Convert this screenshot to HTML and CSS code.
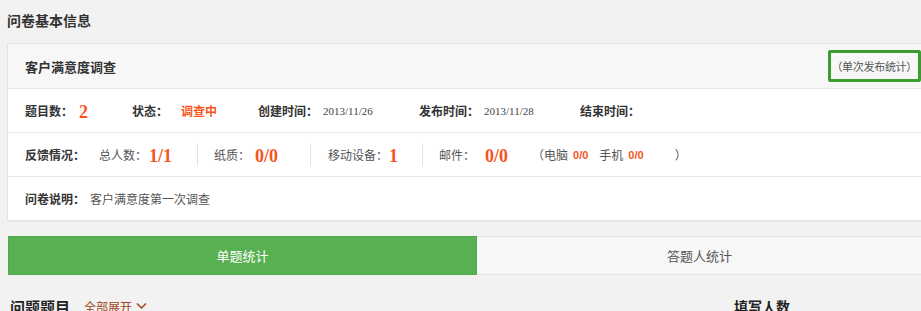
FILE: index.html
```html
<!DOCTYPE html>
<html lang="zh">
<head>
<meta charset="utf-8">
<link rel="stylesheet" href="styles.css">
</head>
<body>
<div class="page">
  <h2 class="page-title">问卷基本信息</h2>
  <div class="card">
    <div class="card-head">
      <span class="survey-name">客户满意度调查</span>
      <span class="scope-box">（单次发布统计）</span>
    </div>
    <div class="row">
      <span class="lbl w-count">题目数：</span><span class="big num-count">2</span>
      <span class="lbl w-state">状态：</span><span class="state">调查中</span>
      <span class="lbl w-time">创建时间：</span><span class="date">2013/11/26</span>
      <span class="lbl w-time">发布时间：</span><span class="date">2013/11/28</span>
      <span class="lbl">结束时间：</span>
    </div>
    <div class="row">
      <span class="lbl w-fb">反馈情况：</span>
      <span class="item it-total"><span class="sub">总人数：</span><span class="big">1/1</span></span>
      <span class="item it-paper"><span class="sub">纸质：</span><span class="big">0/0</span></span>
      <span class="item it-mobile"><span class="sub">移动设备：</span><span class="big">1</span></span>
      <span class="item it-mail"><span class="sub">邮件：</span><span class="big">0/0</span>
        <span class="detail">（电脑<b class="small-num">0/0</b>手机<b class="small-num">0/0</b><span class="close-paren">）</span></span>
      </span>
    </div>
    <div class="row last">
      <span class="lbl w-desc">问卷说明：</span><span class="sub">客户满意度第一次调查</span>
    </div>
  </div>
  <div class="tabs">
    <div class="tab active">单题统计</div>
    <div class="tab">答题人统计</div>
  </div>
  <div class="list-head">
    <span class="q-title">问题题目</span>
    <span class="expand">全部展开
      <svg width="11" height="8" viewBox="0 0 11 8"><path d="M1 1.5 L5.5 6 L10 1.5" fill="none" stroke="#a0461c" stroke-width="1.5"/></svg>
    </span>
    <span class="count-title">填写人数</span>
  </div>
</div>
</body>
</html>
```
FILE: styles.css
```css
html, body {
  margin: 0;
  padding: 0;
  background: #f2f2f2;
  overflow: hidden;
}
body {
  font-family: "Noto Sans CJK SC", "Noto Sans", sans-serif;
  font-size: 12px;
  color: #333;
}
.page {
  width: 914px;
  padding: 0 0 0 7px;
}
.page-title {
  margin: 0;
  height: 43px;
  line-height: 40px;
  font-size: 14px;
  font-weight: bold;
  color: #333;
}
.card {
  width: 916px;
  background: #fff;
  border: 1px solid #e3e3e3;
  box-shadow: 0 1px 1px rgba(0,0,0,0.04);
}
.card-head {
  display: flex;
  align-items: center;
  justify-content: space-between;
  height: 44px;
  padding-left: 17px;
  background: #f7f7f7;
  border-bottom: 1px solid #e6e6e6;
}
.survey-name {
  font-size: 13px;
  font-weight: bold;
  color: #333;
}
.scope-box {
  box-sizing: border-box;
  width: 93px;
  height: 32px;
  margin-right: 3px;
  border: 3px solid #3a9e2f;
  border-radius: 2px;
  display: flex;
  align-items: center;
  justify-content: flex-end;
  padding-right: 1px;
  font-size: 11px;
  color: #555;
  letter-spacing: -0.3px;
}
.row {
  display: flex;
  align-items: center;
  height: 43px;
  padding-left: 17px;
  border-bottom: 1px solid #e6e6e6;
}
.row.last {
  border-bottom: none;
}
.lbl {
  font-weight: bold;
  color: #333;
  font-size: 12px;
}
.w-count { width: 54px; }
.num-count { width: 53px; }
.w-state { width: 49px; }
.state { width: 77px; color: #f5541e; font-weight: bold; font-size: 12px; }
.w-time { width: 65px; }
.date {
  width: 96px;
  font-family: "Liberation Serif", serif;
  font-size: 11px;
  color: #444;
}
.big {
  font-family: "Liberation Serif", "DejaVu Serif", serif;
  font-weight: bold;
  font-size: 18px;
  color: #f5541e;
  line-height: 1;
  padding-top: 3px;
}
.sub {
  color: #555;
  font-size: 12px;
}
.w-fb { width: 74px; }
.item {
  display: flex;
  align-items: center;
  box-sizing: border-box;
  height: 23px;
  border-right: 1px solid #e3e3e3;
}
.it-total { width: 99px; }
.it-total .sub { width: 50px; }
.it-paper { width: 113px; padding-left: 16px; }
.it-paper .sub { width: 41px; }
.it-mobile { width: 112px; padding-left: 17px; }
.it-mobile .sub { width: 61px; }
.it-mail { border-right: none; padding-left: 16px; }
.it-mail .sub { width: 46px; }
.it-mail .big { width: 49px; }
.detail {
  display: flex;
  align-items: center;
  color: #555;
  font-size: 12px;
  margin-left: -2px;
}
.small-num {
  font-family: "Liberation Sans", sans-serif;
  font-size: 11px;
  color: #f5541e;
  margin: 0 11px 0 5px;
}
.close-paren { margin-left: 20px; }
.w-desc { width: 65px; }
.tabs {
  display: flex;
  margin-top: 15px;
  width: 916px;
  height: 39px;
}
.tab {
  display: flex;
  align-items: center;
  justify-content: center;
  box-sizing: border-box;
  font-size: 13px;
  color: #555;
  background: #f7f7f7;
  border: 1px solid #e6e6e6;
  border-left: none;
  flex: 1;
}
.tab.active {
  flex: 0 0 469px;
  background: #57b052;
  border: 1px solid #4fa84a;
  color: #fff;
  margin-left: 1px;
}
.list-head {
  display: flex;
  align-items: center;
  height: 36px;
  margin-top: 7px;
  padding-left: 3px;
}
.q-title {
  font-size: 15px;
  font-weight: bold;
  color: #222;
  width: 74px;
  padding-top: 12px;
}
.expand {
  color: #a0461c;
  font-size: 12px;
  width: 650px;
  padding-top: 12px;
  display: flex;
  align-items: center;
  gap: 4px;
}
.count-title {
  font-size: 14px;
  font-weight: bold;
  color: #222;
  padding-top: 12px;
}
```
